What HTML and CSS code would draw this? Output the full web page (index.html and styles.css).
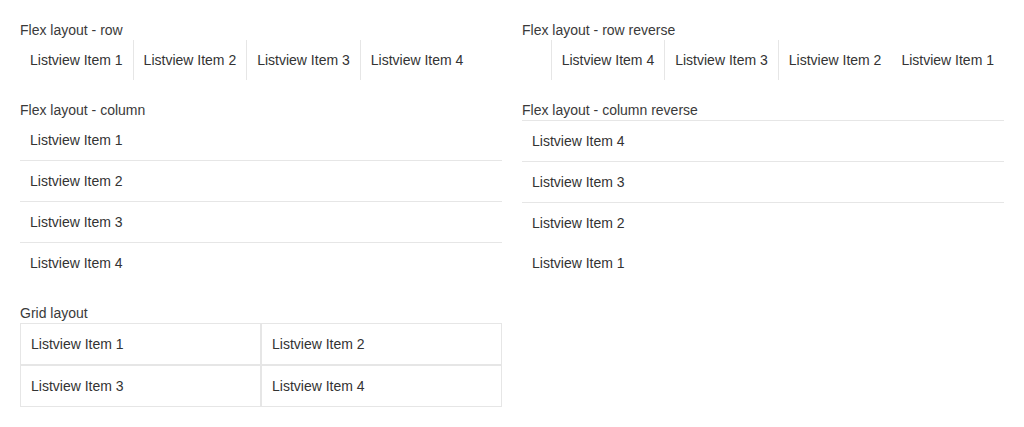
FILE: index.html
```html
<!DOCTYPE html>
<html>
<head>
<meta charset="utf-8">
<link rel="stylesheet" href="styles.css">
</head>
<body>
<div class="page">
  <section class="demo">
    <div class="title">Flex layout - row</div>
    <ul class="list list-row">
      <li>Listview Item 1</li>
      <li>Listview Item 2</li>
      <li>Listview Item 3</li>
      <li>Listview Item 4</li>
    </ul>
  </section>
  <section class="demo">
    <div class="title">Flex layout - row reverse</div>
    <ul class="list list-row-reverse">
      <li>Listview Item 1</li>
      <li>Listview Item 2</li>
      <li>Listview Item 3</li>
      <li>Listview Item 4</li>
    </ul>
  </section>
  <section class="demo">
    <div class="title">Flex layout - column</div>
    <ul class="list list-column">
      <li>Listview Item 1</li>
      <li>Listview Item 2</li>
      <li>Listview Item 3</li>
      <li>Listview Item 4</li>
    </ul>
  </section>
  <section class="demo">
    <div class="title">Flex layout - column reverse</div>
    <ul class="list list-column-reverse">
      <li>Listview Item 1</li>
      <li>Listview Item 2</li>
      <li>Listview Item 3</li>
      <li>Listview Item 4</li>
    </ul>
  </section>
  <section class="demo">
    <div class="title">Grid layout</div>
    <ul class="list list-grid">
      <li>Listview Item 1</li>
      <li>Listview Item 2</li>
      <li>Listview Item 3</li>
      <li>Listview Item 4</li>
    </ul>
  </section>
</div>
</body>
</html>
```

FILE: styles.css
```css
html, body {
  margin: 0;
  padding: 0;
  background: #ffffff;
}
body {
  font-family: "Liberation Sans", Arial, sans-serif;
  font-size: 14px;
  line-height: 20px;
  color: #333333;
}
.page {
  padding: 20px;
  display: grid;
  grid-template-columns: 1fr 1fr;
  column-gap: 20px;
  row-gap: 20px;
  align-items: start;
}
.demo {
  display: flex;
  flex-direction: column;
  min-width: 0;
}
.title {
  color: #3a3a3a;
  line-height: 20px;
}
.list {
  list-style: none;
  margin: 0;
  padding: 0;
  display: flex;
}
.list li {
  padding: 10px;
  line-height: 20px;
  white-space: nowrap;
}
.list-row {
  flex-direction: row;
}
.list-row-reverse {
  flex-direction: row-reverse;
}
.list-row li + li,
.list-row-reverse li + li {
  border-left: 1px solid #e6e6e6;
}
.list-column {
  flex-direction: column;
}
.list-column-reverse {
  flex-direction: column-reverse;
}
.list-column li + li,
.list-column-reverse li + li {
  border-top: 1px solid #e6e6e6;
}
.list-grid {
  display: grid;
  grid-template-columns: 1fr 1fr;
}
.list-grid li {
  border: 1px solid #e6e6e6;
}
```
